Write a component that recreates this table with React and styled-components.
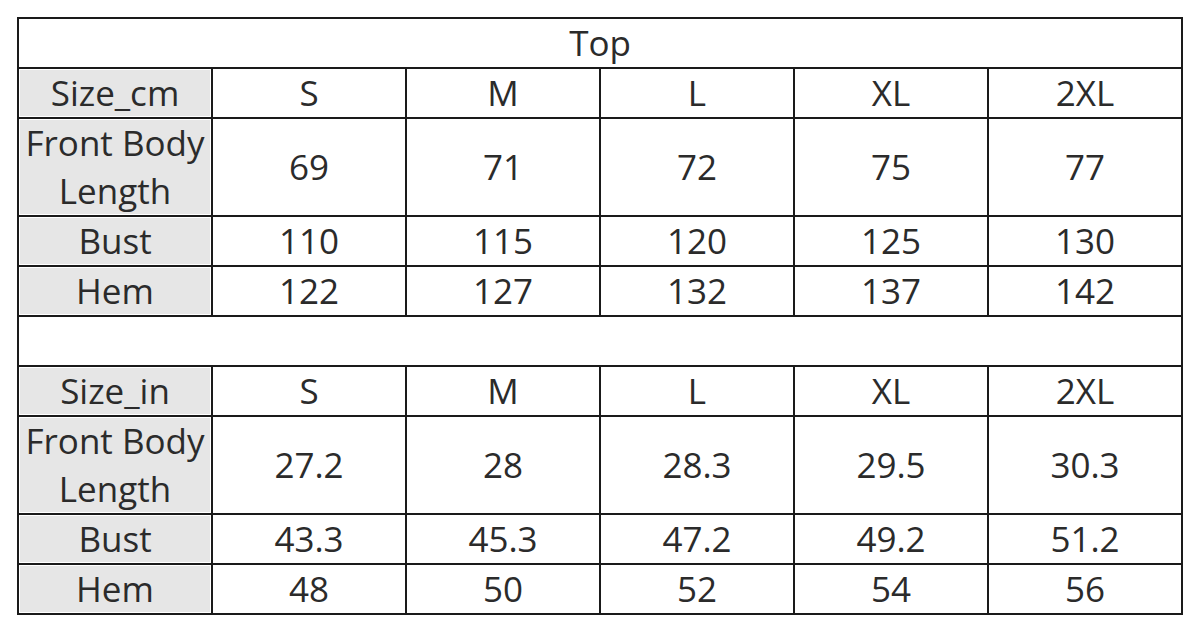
import styled, { createGlobalStyle } from "styled-components";

const GlobalStyle = createGlobalStyle`
  html, body {
    margin: 0;
    padding: 0;
    background: #ffffff;
  }
`;

const Page = styled.div`
  padding: 17px 0 0 17px;
`;

const Table = styled.table`
  border-collapse: collapse;
  table-layout: fixed;
  width: 1166px;
  font-family: "Open Sans", "Noto Sans", sans-serif;
  font-size: 35px;
  color: #2b2b2b;
`;

const Cell = styled.td`
  border: 2px solid #1a1a1a;
  text-align: center;
  vertical-align: middle;
  padding: 0;
  height: ${(props) => (props.tall ? "96px" : "48px")};
  line-height: ${(props) => (props.tall ? "48px" : "46px")};
  background: ${(props) => (props.label ? "#e6e6e6" : "#ffffff")};
  box-shadow: ${(props) => (props.label ? "inset 0 0 0 1px #ffffff" : "none")};
`;

const cmRows = [
  { label: "Front Body Length", values: ["69", "71", "72", "75", "77"], tall: true },
  { label: "Bust", values: ["110", "115", "120", "125", "130"] },
  { label: "Hem", values: ["122", "127", "132", "137", "142"] },
];

const inRows = [
  { label: "Front Body Length", values: ["27.2", "28", "28.3", "29.5", "30.3"], tall: true },
  { label: "Bust", values: ["43.3", "45.3", "47.2", "49.2", "51.2"] },
  { label: "Hem", values: ["48", "50", "52", "54", "56"] },
];

const sizes = ["S", "M", "L", "XL", "2XL"];

const Block = ({ unit, rows }) => (
  <>
    <tr>
      <Cell label="true">{unit}</Cell>
      {sizes.map((s) => (
        <Cell key={s}>{s}</Cell>
      ))}
    </tr>
    {rows.map((row) => (
      <tr key={row.label}>
        <Cell label="true" tall={row.tall ? "true" : undefined}>
          {row.tall ? (
            <>
              Front Body
              <br />
              Length
            </>
          ) : (
            row.label
          )}
        </Cell>
        {row.values.map((v, i) => (
          <Cell key={i} tall={row.tall ? "true" : undefined}>
            {v}
          </Cell>
        ))}
      </tr>
    ))}
  </>
);

const App = () => (
  <>
    <GlobalStyle />
    <Page>
      <Table>
        <colgroup>
          {Array.from({ length: 6 }).map((_, i) => (
            <col key={i} style={{ width: "194px" }} />
          ))}
        </colgroup>
        <tbody>
          <tr>
            <Cell colSpan={6}>Top</Cell>
          </tr>
          <Block unit="Size_cm" rows={cmRows} />
          <tr>
            <Cell colSpan={6} />
          </tr>
          <Block unit="Size_in" rows={inRows} />
        </tbody>
      </Table>
    </Page>
  </>
);

export default App;
